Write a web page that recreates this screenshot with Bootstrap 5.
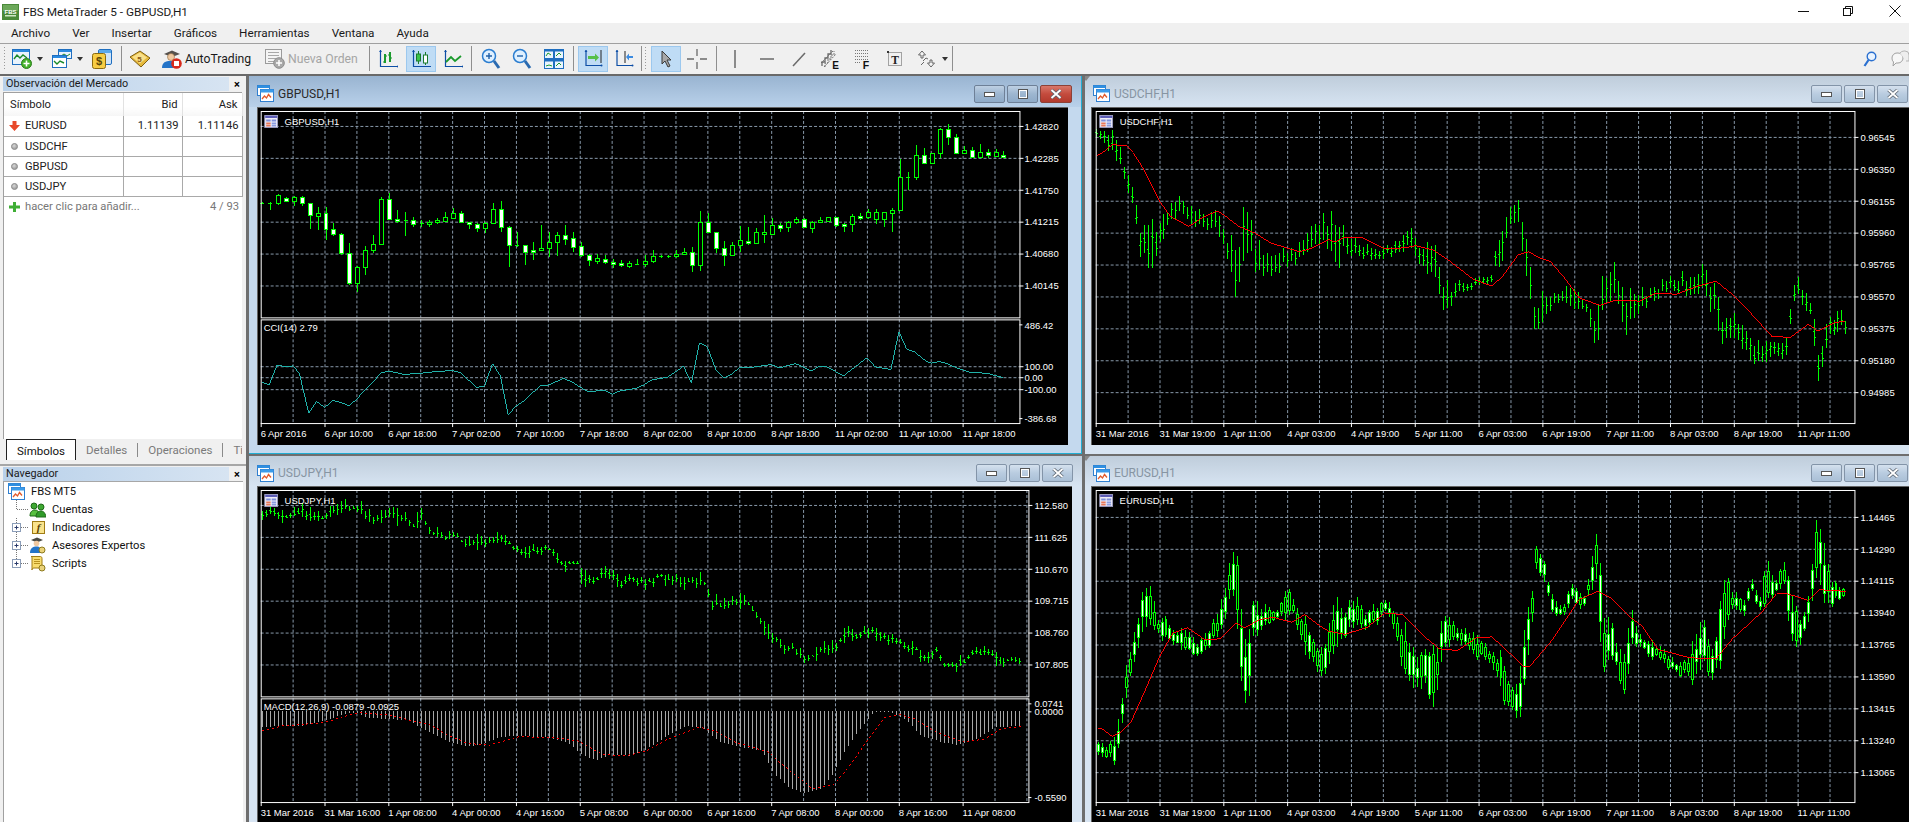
<!DOCTYPE html>
<html lang="es">
<head>
<meta charset="utf-8">
<title>FBS MetaTrader 5 - GBPUSD,H1</title>
<link rel="stylesheet" href="https://cdn.jsdelivr.net/npm/bootstrap@5.3.0/dist/css/bootstrap.min.css">
<style>
html,body{height:100%;margin:0;overflow:hidden;background:#f0f0f0}
body{font:11.2px Roboto,"Liberation Sans",sans-serif;color:#1a1a1a;display:flex;flex-direction:column;width:1909px;height:822px}
.titlebar{height:23px;background:#fff;font-size:11.8px;padding-left:2px;flex:none}
.titlebar .ttl{margin-left:4px}
.winctl{width:103px;margin-right:8px}
.menubar{height:21px;background:#f0f0f0;border-bottom:1px solid #a0a0a0;padding-left:11px;gap:22px;font-size:11.7px;flex:none}
.toolbar{height:32px;background:#f0f0f0;border-bottom:2px solid #696969;flex:none;padding-bottom:1px;font-size:12.2px}
.toolbar svg{flex:none;display:block}
.tsep{width:1px;height:25px;background:#8f8f8f;flex:none}
.tgrip{width:3px;height:25px;background:radial-gradient(circle,#9a9a9a 40%,transparent 45%) 0 0/3px 3px;flex:none}
.tact{width:30px;height:26px;background:#bfdcf5;border:1px solid #9cc8ee;display:flex;align-items:center;justify-content:center;flex:none}
.tcaret{width:0;height:0;border:3.5px solid transparent;border-top:4.5px solid #333;border-bottom:0;flex:none}
.txt-at{width:66px;margin-left:3px;white-space:nowrap;flex:none}
.txt-no{width:70px;margin-left:3px;color:#a5a5a5;white-space:nowrap;flex:none}
.m2{margin-left:2px}.m3{margin-left:3px}.m4{margin-left:4px}.m5{margin-left:5px}.m6{margin-left:6px}.m7{margin-left:7px}.m8{margin-left:8px}.m9{margin-left:9px}.m11{margin-left:11px}.m12{margin-left:12px}.m14{margin-left:14px}
.workarea{flex:1;min-height:0;display:flex}
.sidebar{width:246px;flex:none;background:#f0f0f0;display:flex;flex-direction:column}
.caption{margin:1px 0 0 3px;height:14px;display:flex;align-items:center;font-size:10.8px;flex:none}
.caption .capt{width:226px;height:14px;line-height:13px;padding-left:3px;background:linear-gradient(90deg,#b9d1ea,#d7e4f2);white-space:nowrap;overflow:hidden}
.caption .capx{width:16px;text-align:center;font-weight:700;font-size:11px;line-height:13px;color:#000}
.mw-panel{height:347px;margin:1px 4px 0 3px;background:#fff;border:solid #a0a0a0;border-width:1px 0 0 1px;flex:none}
.mw-table{table-layout:fixed;width:238px;margin:0;font-size:11.2px;--bs-table-bg:transparent}
.mwc1{width:119px}.mwc2{width:59px}.mwc3{width:60px}
.mw-table th,.mw-table td{padding:0 3px 0 4px;height:20px;border:0;border-right:1px solid #a9a9a9;border-bottom:1px solid #a9a9a9;font-weight:400;vertical-align:middle;color:#222;white-space:nowrap}
.mw-table th{height:23px;border-bottom:0;background:linear-gradient(#fff 60%,#f6f6f6);border-right-color:#e2e2e2;padding:0 4px 0 6px}
.mw-table td.sym{padding-left:4px}
.mw-table tfoot td{border:0;color:#777}
.symdot{width:7px;height:7px;border-radius:50%;background:radial-gradient(circle at 40% 35%,#d8d8d8,#8a8a8a);border:1px solid #8f8f8f;display:inline-block;margin:0 7px 0 3px;vertical-align:-0.5px}
.symico{display:inline-block;vertical-align:-2px;margin:0 5px 0 1px}
.tabstrip{height:22px;margin-left:3px;margin-right:4px;font-size:11.5px;color:#7a7a7a;flex:none;overflow:hidden}
.tabstrip>span{flex:none;white-space:nowrap}
.tabon{width:70px;height:21px;margin-left:3px;margin-top:-1px;background:#fff;border:1px solid #222;border-bottom:0;color:#111;display:flex;align-items:center;justify-content:center;padding-top:1px}
.tabdiv{width:1px;height:14px;background:#8a8a8a}
.tablabel{padding:0 10px}
.hsplit{height:2px;margin-top:3px;background:#a7a7a7;flex:none}
.nav-panel{flex:1;margin:0 3px 0 3px;background:#fff;border-left:1px solid #a0a0a0;border-top:1px solid #a7a7a7;padding-top:0;font-size:11.2px}
.treerow{height:18px;display:flex;align-items:center;white-space:nowrap;color:#111}
.treerow svg{flex:none;display:block}
.treerow .lbl{margin-left:6px}
.mdi{flex:1;min-width:0;background:#6e6e6e;padding-left:3px;display:grid;grid-template-columns:833px 825px;grid-template-rows:378px 366px;column-gap:3px;row-gap:2px;overflow:hidden}
.mdiwin{position:relative;overflow:hidden;background:#d7e4f2}
.mdiwin.on{background:#c4d9ee;border:solid #20add2;border-width:0 1px 1px 0}
.wintitle{height:31px;display:flex;align-items:center;padding:4px 2px 0 8px;background:linear-gradient(#bfcddb,#d7e4f2);color:#8795a3;font-size:12px}
.lower .wintitle{height:30px}
.on .wintitle{background:linear-gradient(#99b4d1,#b9d1ea);color:#2a2a2a;padding-right:8px}
.col1 .wintitle{padding-right:9px}
.wintitle .wtx{margin-left:4px}
.winbtns{margin-left:auto;display:flex;gap:2px}
.wbtn{width:31px;height:18px;padding:0;border:1px solid #8394a8;border-radius:2px;background:linear-gradient(#d5e1ee,#b9cce0 50%,#aac0d6);display:flex;align-items:center;justify-content:center}
.on .wbtn{background:linear-gradient(#bed0e3,#9db6d0 50%,#8fabc8);border-color:#6e8097}
.on .wbtn.cls{background:linear-gradient(#d8776a,#c44b3d 50%,#b23a2d);border-color:#8c4137;width:32px}
.chart{display:block;background:#000;border-top:1px solid #646464;border-left:1px solid #646464}
.col1 .chart{margin-left:8px}
.col2 .chart{margin-left:6px}
.ctx{font:9.5px "Liberation Sans",sans-serif;fill:#fff}
.splitmark{position:absolute;left:-3px;top:0;width:0;height:0;border:4px solid transparent;border-top:5px solid #888;border-bottom:0}
</style>
</head>
<body>
<svg class="d-none" aria-hidden="true">
  <symbol id="i-win" viewBox="0 0 17 17">
    <rect x=".5" y=".5" width="12" height="10" fill="#fff" stroke="#2f7fd0"/><rect x=".5" y=".5" width="12" height="2.5" fill="#2f8fe0"/>
    <rect x="3.5" y="4.5" width="13" height="12" fill="#fff" stroke="#2f7fd0"/><rect x="3.5" y="4.5" width="13" height="3" fill="#3a9bea"/>
    <path d="M5 14l2.500-3 2 2 2-3.500 2.500 3" fill="none" stroke="#e25b2c" stroke-width="1.300"/>
  </symbol>
  <symbol id="i-tab" viewBox="0 0 14 13">
    <rect x=".5" y=".5" width="13" height="12" fill="#f0eef8" stroke="#9a9ac0"/><rect x="1" y="1" width="12" height="2" fill="#5a5ab4"/>
    <path d="M2 4.500h4.500v2H2zM7.500 4.500H12v2H7.500z" fill="#7f8fd8"/><path d="M2 7.500h4.500v2H2zM2 10h4.500v1.600H2z" fill="#e6785a"/><path d="M7.500 7.500H12v2H7.500zM7.500 10H12v1.600H7.500z" fill="#8a9be0"/>
  </symbol>
  <symbol id="i-x" viewBox="0 0 12 10">
    <path d="M1.500 1l9 8M10.500 1l-9 8" stroke="#5a6470" stroke-width="3.400"/><path d="M1.500 1l9 8M10.500 1l-9 8" stroke="#fff" stroke-width="1.800"/>
  </symbol>
  <symbol id="i-min" viewBox="0 0 11 6"><rect x=".5" y="1.500" width="10" height="4" fill="#fff" stroke="#555"/></symbol>
  <symbol id="i-max" viewBox="0 0 10 10"><rect x="1" y="1" width="8" height="8" fill="none" stroke="#fff" stroke-width="2"/><rect x=".5" y=".5" width="9" height="9" fill="none" stroke="#555"/></symbol>
</svg>

<div class="titlebar d-flex align-items-center">
  <svg width="17" height="16" viewBox="0 0 17 16"><rect width="17" height="16" fill="#4b8a3a"/><rect x="1" y="1" width="15" height="6" fill="#6ca85a"/><text x="8.500" y="9.500" text-anchor="middle" font-family="Liberation Sans" font-weight="700" font-size="6" fill="#fff">FBS</text><rect x="3" y="11" width="11" height="1.500" fill="#cfe6c5"/></svg>
  <span class="ttl">FBS MetaTrader 5 - GBPUSD,H1</span>
  <svg class="ms-auto winctl" width="103" height="16" viewBox="0 0 103 16">
    <path d="M0 7.500h11" stroke="#111"/>
    <rect x="45.500" y="4.500" width="7" height="7" fill="none" stroke="#111"/>
    <path d="M47.500 4.500V2.500h7v7h-2" fill="none" stroke="#111"/>
    <path d="M91.500 1.500l11 11M102.500 1.500l-11 11" stroke="#111"/>
  </svg>
</div>
<div class="menubar d-flex align-items-center">
  <span>Archivo</span><span>Ver</span><span>Insertar</span><span>Gráficos</span><span>Herramientas</span><span>Ventana</span><span>Ayuda</span>
</div>
<div class="toolbar d-flex align-items-center">
  <span class="tgrip m3"></span>
  <svg class="m6" width="20" height="20" viewBox="0 0 20 20"><rect x=".5" y=".5" width="17" height="15" fill="#e9f3fc" stroke="#1f6fc0"/><rect x="1" y="1" width="16" height="2" fill="#2a8ae0"/><path d="M2 10l3-4 3 3 3-3 4 3" fill="none" stroke="#1b8a2c" stroke-width="1.400"/><circle cx="14.500" cy="14.500" r="5" fill="#43b02a" stroke="#2b7d1c"/><path d="M14.500 11.500v6M11.500 14.500h6" stroke="#fff" stroke-width="1.600"/></svg>
  <span class="tcaret m5"></span>
  <svg class="m9" width="20" height="20" viewBox="0 0 20 20"><rect x="6.500" y=".5" width="13" height="9" fill="#e9f3fc" stroke="#1f6fc0"/><rect x="7" y="1" width="12" height="2" fill="#2a8ae0"/><path d="M9 7l3-2 3 2 3-2" fill="none" stroke="#1b8a2c"/><rect x=".5" y="6.500" width="14" height="12" fill="#fff" stroke="#1f6fc0"/><rect x="1" y="7" width="13" height="2" fill="#2a8ae0"/><path d="M2 12l3 3 3-3 4 2" fill="none" stroke="#1b8a2c" stroke-width="1.400"/></svg>
  <span class="tcaret m5"></span>
  <svg class="m9" width="20" height="20" viewBox="0 0 20 20"><rect x="6.500" y=".5" width="13" height="15" rx="1.500" fill="#cfe3f8" stroke="#1f6fc0"/><rect x="7" y="1" width="12" height="3" fill="#5aa8ea"/><rect x=".5" y="4.500" width="13" height="15" rx="2" fill="#f7cd45" stroke="#8a6a10"/><text x="7" y="16" text-anchor="middle" font-family="Liberation Sans" font-weight="700" font-size="11" fill="#5b4708">$</text></svg>
  <span class="tsep m9"></span>
  <svg class="m7" width="22" height="20" viewBox="0 0 22 20"><path d="M1 8l10-6 10 7-9 9z" fill="#e5b83a" stroke="#7f5f12"/><path d="M3 8l8-4.500 7 5-7 6z" fill="#f9e08a"/><text x="10.500" y="13" text-anchor="middle" font-family="Liberation Sans" font-weight="700" font-size="8" fill="#8a5a12">5</text></svg>
  <svg class="m11" width="20" height="20" viewBox="0 0 20 20"><path d="M2 5l8-3.500L18 5l-8 3z" fill="#55504c"/><circle cx="9" cy="8" r="3.500" fill="#f0c8a0" stroke="#8a6a40" stroke-width=".6"/><path d="M0 19c0-6 4-7 8-7 2 0 4 .5 5 2l-2 5z" fill="#2474c8"/><circle cx="14.500" cy="14.500" r="5.300" fill="#d8291c"/><rect x="12" y="12" width="5" height="5" fill="#fff"/></svg>
  <span class="txt-at">AutoTrading</span>
  <svg class="m14" width="20" height="20" viewBox="0 0 20 20"><rect x=".5" y=".5" width="16" height="14" fill="#f4f4f4" stroke="#9b9b9b"/><path d="M3 3.500h11M3 6.500h11M3 9.500h8M3 12.500h6" stroke="#a8a8a8"/><circle cx="14" cy="14" r="5.300" fill="#a9a9a9" stroke="#8c8c8c"/><path d="M14 11v6M11 14h6" stroke="#fff" stroke-width="1.500"/></svg>
  <span class="txt-no">Nueva Orden</span>
  <span class="tsep m11"></span>
  <svg class="m8" width="20" height="20" viewBox="0 0 20 20"><path d="M2.500 1v16.500H20" fill="none" stroke="#0d4ea6" stroke-width="1.200"/><path d="M2.500 1l-1.500 2h3zM19 16l1 1.500-1 1.500z" fill="#0d4ea6"/><path d="M7 5v9M5.500 13H7M7 7h1.500M12 3v10M10.500 6H12M12 9h1.500" stroke="#1a9a2c" stroke-width="2"/></svg>
  <span class="tact m8"><svg width="20" height="20" viewBox="0 0 20 20"><path d="M2.500 1v16.500H20" fill="none" stroke="#0d4ea6" stroke-width="1.200"/><path d="M2.500 1l-1.500 2h3z" fill="#0d4ea6"/><rect x="5.500" y="5" width="4" height="7" fill="#3cc44a" stroke="#1a7a2c"/><path d="M7.500 2v3M7.500 12v3" stroke="#1a7a2c"/><rect x="12.500" y="6" width="4" height="8" fill="#fff" stroke="#1a7a2c"/><path d="M14.500 3v3M14.500 14v2" stroke="#1a7a2c"/></svg></span>
  <svg class="m7" width="20" height="20" viewBox="0 0 20 20"><path d="M2.500 1v16.500H20" fill="none" stroke="#0d4ea6" stroke-width="1.200"/><path d="M2.500 1l-1.500 2h3zM19 16l1 1.500-1 1.500z" fill="#0d4ea6"/><path d="M3 13l5-5 4 4 6-5" fill="none" stroke="#1a9a2c" stroke-width="1.800"/></svg>
  <span class="tsep m8"></span>
  <svg class="m9" width="20" height="22" viewBox="0 0 20 22"><circle cx="8" cy="8" r="6.500" fill="#dff0ff" stroke="#2a7dd0" stroke-width="1.500"/><path d="M5 8h6M8 5v6" stroke="#1f5fa8" stroke-width="1.400"/><path d="M13 13l5 7" stroke="#2a6ab0" stroke-width="3"/></svg>
  <svg class="m11" width="20" height="22" viewBox="0 0 20 22"><circle cx="8" cy="8" r="6.500" fill="#dff0ff" stroke="#2a7dd0" stroke-width="1.500"/><path d="M5 8h6" stroke="#1f5fa8" stroke-width="1.400"/><path d="M13 13l5 7" stroke="#2a6ab0" stroke-width="3"/></svg>
  <svg class="m12" width="20" height="20" viewBox="0 0 20 20"><rect x=".5" y=".5" width="9" height="9" fill="#eaf4fd" stroke="#1f6fc0"/><rect x="10.500" y=".5" width="9" height="9" fill="#eaf4fd" stroke="#1f6fc0"/><rect x=".5" y="10.500" width="9" height="9" fill="#eaf4fd" stroke="#1f6fc0"/><rect x="10.500" y="10.500" width="9" height="9" fill="#eaf4fd" stroke="#1f6fc0"/><path d="M1 1.500h8M11 1.500h8M1 11.500h8M11 11.500h8" stroke="#1f6fc0" stroke-width="2"/><path d="M2 7l2-3 3 2M12 7l3-3 2 2M2 17l3-1 3 1M12 17l3-3 2 2" fill="none" stroke="#1a9a2c"/></svg>
  <span class="tsep m9"></span>
  <span class="tact m4"><svg width="20" height="20" viewBox="0 0 20 20"><path d="M3 1v15.500h16" fill="none" stroke="#0d4ea6" stroke-width="1.200"/><path d="M3 1L1.500 3h3z" fill="#0d4ea6"/><circle cx="18.500" cy="16.500" r="1" fill="#0d4ea6"/><path d="M5 7h7V4.500L16 8.500 12 12.500V10H5z" fill="#56c04a"/><path d="M18 1v13" stroke="#222"/></svg></span>
  <svg class="m6" width="20" height="20" viewBox="0 0 20 20"><path d="M3 1v15.500h16" fill="none" stroke="#0d4ea6" stroke-width="1.200"/><path d="M3 1L1.500 3h3z" fill="#0d4ea6"/><circle cx="18.500" cy="16.500" r="1" fill="#0d4ea6"/><path d="M11 2v12" stroke="#222"/><path d="M19 7h-4V4.500L12 8l3 3.500V9h4z" fill="#3a8ae0"/></svg>
  <span class="tsep m7"></span><span class="tgrip m2"></span>
  <span class="tact m4"><svg width="14" height="18" viewBox="0 0 14 18"><path d="M3 1v13l3-3 3 6 2-1-3-6h4z" fill="#a8a8a8" stroke="#3a3a3a"/></svg></span>
  <svg class="m6" width="20" height="20" viewBox="0 0 20 20"><path d="M10 0v7M10 13v7M0 10h7M13 10h7" stroke="#6a6a6a" stroke-width="1.300"/></svg>
  <span class="tsep m9"></span>
  <svg class="m8" width="20" height="20" viewBox="0 0 20 20"><path d="M10 1v18" stroke="#6a6a6a" stroke-width="1.500"/></svg>
  <svg class="m12" width="20" height="20" viewBox="0 0 20 20"><path d="M3 10h14" stroke="#6a6a6a" stroke-width="1.500"/></svg>
  <svg class="m12" width="20" height="20" viewBox="0 0 20 20"><path d="M4 17L16 4" stroke="#6a6a6a" stroke-width="1.500"/></svg>
  <svg class="m12" width="20" height="20" viewBox="0 0 20 20"><path d="M1 17V13h3V9h3V5h3V1" fill="none" stroke="#6a6a6a" stroke-width="1.300"/><path d="M4 18v-4h3v-4h3V6h3V2M0 14L12 2M3 18L15 5" fill="none" stroke="#6a6a6a" stroke-width=".9" stroke-dasharray="2 1"/><text x="14.500" y="19.500" font-family="Liberation Sans" font-weight="700" font-size="10" fill="#111" text-anchor="middle">E</text></svg>
  <svg class="m12" width="20" height="20" viewBox="0 0 20 20"><path d="M2 1.500h14M2 4.500h14M2 7.500h14M2 10.500h14M2 13.500h6" stroke="#777" stroke-dasharray="1 1"/><text x="13" y="19.500" font-family="Liberation Sans" font-weight="700" font-size="10.500" fill="#111" text-anchor="middle">F</text></svg>
  <svg class="m12" width="20" height="20" viewBox="0 0 20 20"><rect x="3.500" y="3.500" width="13" height="13" fill="none" stroke="#555" stroke-dasharray="1 1"/><rect x="2" y="2" width="2" height="2" fill="#333"/><text x="10" y="14.500" font-family="Liberation Serif" font-weight="700" font-size="11.500" fill="#222" text-anchor="middle">T</text></svg>
  <svg class="m12" width="20" height="20" viewBox="0 0 20 20"><path d="M5 2L1.500 6H4v3h2V6h2.500zM14 18l3.500-4H15v-3h-2v3h-2.500z" fill="#f4f4f4" stroke="#666"/><path d="M4 16l3-3M6 12l3-3 2 1" fill="none" stroke="#666"/></svg>
  <span class="tcaret m5"></span>
  <span class="tsep m4"></span>
  <svg class="ms-auto" width="14" height="16" viewBox="0 0 14 16"><circle cx="8.500" cy="5.500" r="4.300" fill="#eaf4ff" stroke="#2a70d0" stroke-width="1.400"/><path d="M5.500 9L1.500 15" stroke="#2a70d0" stroke-width="2.200"/></svg>
  <svg class="m14" width="18" height="18" viewBox="0 0 18 18"><path d="M1 8a5 5 0 0 1 5-5h1a5 5 0 0 1 0 10H5l-3 3 .5-4A5 5 0 0 1 1 8z" fill="#f7f7f7" stroke="#a0a0a0"/><path d="M9 3a5 5 0 0 1 4-2h1a4 4 0 0 1 4 4v6h-3" fill="#eee" stroke="#b5b5b5"/></svg>
</div>

<div class="workarea">
  <aside class="sidebar">
    <div class="caption"><span class="capt">Observación del Mercado</span><span class="capx">×</span></div>
    <div class="mw-panel">
      <table class="table mw-table">
        <colgroup><col class="mwc1"><col class="mwc2"><col class="mwc3"></colgroup>
        <thead><tr><th>Símbolo</th><th class="text-end">Bid</th><th class="text-end">Ask</th></tr></thead>
        <tbody>
          <tr><td class="sym"><svg class="symico" width="11" height="10" viewBox="0 0 11 10"><path d="M3.500 0h4v4H11L5.500 10 0 4h3.500z" fill="#e8492a"/></svg>EURUSD</td><td class="text-end">1.11139</td><td class="text-end">1.11146</td></tr>
          <tr><td class="sym"><span class="symdot"></span>USDCHF</td><td></td><td></td></tr>
          <tr><td class="sym"><span class="symdot"></span>GBPUSD</td><td></td><td></td></tr>
          <tr><td class="sym"><span class="symdot"></span>USDJPY</td><td></td><td></td></tr>
        </tbody>
        <tfoot><tr><td class="sym" colspan="2"><svg class="symico" width="11" height="10" viewBox="0 0 11 10"><path d="M4 0h3v3.500h4v3H7V10H4V6.500H0v-3h4z" fill="#3fae35"/></svg>hacer clic para añadir...</td><td class="text-end">4 / 93</td></tr></tfoot>
      </table>
    </div>
    <div class="tabstrip d-flex align-items-center">
      <span class="tabon">Símbolos</span><span class="tablabel">Detalles</span><span class="tabdiv"></span><span class="tablabel">Operaciones</span><span class="tabdiv"></span><span class="tablabel">Ti</span>
    </div>
    <div class="hsplit"></div>
    <div class="caption"><span class="capt">Navegador</span><span class="capx">×</span></div>
    <div class="nav-panel">
      <div class="treerow"><svg class="m4" width="17" height="17"><use href="#i-win"/></svg><span class="lbl">FBS MT5</span></div>
      <div class="treerow">
        <svg width="25" height="18" viewBox="0 0 25 18"><path d="M12.500 0v9M13 9.500h12" stroke="#777" stroke-dasharray="1 1"/></svg>
        <svg width="17" height="17" viewBox="0 0 17 17"><circle cx="5" cy="5" r="3" fill="#3ea832" stroke="#1f6a18"/><circle cx="12" cy="6" r="3" fill="#3ea832" stroke="#1f6a18"/><path d="M1 15c0-5 3-6 5-6s4 1 5 6z" fill="#57c040" stroke="#1f6a18"/><path d="M7 16c0-5 3-6 5-6s4 1 5 6z" fill="#2f9a28" stroke="#1f6a18"/></svg>
        <span class="lbl">Cuentas</span>
      </div>
      <div class="treerow">
        <svg width="25" height="18" viewBox="0 0 25 18"><path d="M12.500 0v18M17 9.500h8" stroke="#777" stroke-dasharray="1 1"/><rect x="8.500" y="5.500" width="8" height="8" fill="#fff" stroke="#8b9db8"/><path d="M10.500 9.500h4M12.500 7.500v4" stroke="#2a3a6a"/></svg>
        <svg width="17" height="17" viewBox="0 0 17 17"><rect x="3.500" y="2.500" width="12" height="12" fill="#f9e38c" stroke="#a07c15"/><text x="9.500" y="12" text-anchor="middle" font-family="Liberation Serif" font-style="italic" font-weight="700" font-size="11" fill="#5a4206">f</text></svg>
        <span class="lbl">Indicadores</span>
      </div>
      <div class="treerow">
        <svg width="25" height="18" viewBox="0 0 25 18"><path d="M12.500 0v18M17 9.500h8" stroke="#777" stroke-dasharray="1 1"/><rect x="8.500" y="5.500" width="8" height="8" fill="#fff" stroke="#8b9db8"/><path d="M10.500 9.500h4M12.500 7.500v4" stroke="#2a3a6a"/></svg>
        <svg width="17" height="17" viewBox="0 0 17 17"><path d="M2 3l6-2.500L14 3 8 5.500z" fill="#4a4a44"/><circle cx="7.500" cy="6.500" r="2.800" fill="#f0c8a0"/><path d="M1 16c0-5 3-6.500 6.500-6.500S12 11 12 16z" fill="#2474c8"/><circle cx="13" cy="13" r="3" fill="#ead27a" stroke="#8d7a1e"/></svg>
        <span class="lbl">Asesores Expertos</span>
      </div>
      <div class="treerow">
        <svg width="25" height="18" viewBox="0 0 25 18"><path d="M12.500 0v10M17 9.500h8" stroke="#777" stroke-dasharray="1 1"/><rect x="8.500" y="5.500" width="8" height="8" fill="#fff" stroke="#8b9db8"/><path d="M10.500 9.500h4M12.500 7.500v4" stroke="#2a3a6a"/></svg>
        <svg width="17" height="17" viewBox="0 0 17 17"><path d="M2 1.500h9.500c1 0 1.500 1 1.500 2V13H5c-1.500 0-2 1-2 2V3c0-1-.5-1.500-1-1.500z" fill="#f8dc6e" stroke="#a07c15"/><path d="M5 4.500h6M5 6.500h6M5 8.500h6" stroke="#b8921f"/><circle cx="13" cy="13" r="3" fill="#ead27a" stroke="#8d7a1e"/></svg>
        <span class="lbl">Scripts</span>
      </div>
    </div>
  </aside>

  <main class="mdi">
    <section class="mdiwin on col1">
      <header class="wintitle"><svg width="17" height="17"><use href="#i-win"/></svg><span class="wtx">GBPUSD,H1</span>
        <div class="winbtns"><button class="wbtn" type="button" aria-label="min"><svg width="11" height="6"><use href="#i-min"/></svg></button><button class="wbtn" type="button" aria-label="max"><svg width="10" height="10"><use href="#i-max"/></svg></button><button class="wbtn cls" type="button" aria-label="cerrar"><svg width="12" height="10"><use href="#i-x"/></svg></button></div></header>
      <svg class="chart" id="c-gbp" width="811" height="338" viewBox="258 108 811 338"></svg>
    </section>
    <section class="mdiwin col2">
      <span class="splitmark"></span>
      <header class="wintitle"><svg width="17" height="17"><use href="#i-win"/></svg><span class="wtx">USDCHF,H1</span>
        <div class="winbtns"><button class="wbtn" type="button" aria-label="min"><svg width="11" height="6"><use href="#i-min"/></svg></button><button class="wbtn" type="button" aria-label="max"><svg width="10" height="10"><use href="#i-max"/></svg></button><button class="wbtn" type="button" aria-label="cerrar"><svg width="12" height="10"><use href="#i-x"/></svg></button></div></header>
      <svg class="chart" id="c-chf" width="818" height="338" viewBox="1092 108 818 338"></svg>
    </section>
    <section class="mdiwin col1 lower">
      <header class="wintitle"><svg width="17" height="17"><use href="#i-win"/></svg><span class="wtx">USDJPY,H1</span>
        <div class="winbtns"><button class="wbtn" type="button" aria-label="min"><svg width="11" height="6"><use href="#i-min"/></svg></button><button class="wbtn" type="button" aria-label="max"><svg width="10" height="10"><use href="#i-max"/></svg></button><button class="wbtn" type="button" aria-label="cerrar"><svg width="12" height="10"><use href="#i-x"/></svg></button></div></header>
      <svg class="chart" id="c-jpy" width="815" height="336" viewBox="258 487 815 336"></svg>
    </section>
    <section class="mdiwin col2 lower">
      <span class="splitmark"></span>
      <header class="wintitle"><svg width="17" height="17"><use href="#i-win"/></svg><span class="wtx">EURUSD,H1</span>
        <div class="winbtns"><button class="wbtn" type="button" aria-label="min"><svg width="11" height="6"><use href="#i-min"/></svg></button><button class="wbtn" type="button" aria-label="max"><svg width="10" height="10"><use href="#i-max"/></svg></button><button class="wbtn" type="button" aria-label="cerrar"><svg width="12" height="10"><use href="#i-x"/></svg></button></div></header>
      <svg class="chart" id="c-eur" width="818" height="336" viewBox="1092 487 818 336"></svg>
    </section>
  </main>
</div>

<script src="https://cdn.jsdelivr.net/npm/bootstrap@5.3.0/dist/js/bootstrap.bundle.min.js"></script>
<script>
const GRID='#8899aa',G='#00ff00',ZX=1.889,ZX2=1.891;
function rng(seed){return function(){seed|=0;seed=seed+0x6D2B79F5|0;let t=Math.imul(seed^seed>>>15,1|seed);t=t+Math.imul(t^t>>>7,61|t)^t;return((t^t>>>14)>>>0)/4294967296}}
function interp(tab,X){let i=0;while(i<tab.length-2&&tab[i+1][0]<X)i++;const a=tab[i],b=tab[i+1],f=Math.max(0,Math.min(1,(X-a[0])/(b[0]-a[0])));return a.map((v,k)=>v+(b[k]-v)*f)}
function px(v){return Math.floor(v)+.5}
function frame(c){
  let s='';
  const vx=[];for(let x=c.v0;x<c.R;x+=32)vx.push(px(x));
  c.panes.forEach(p=>{
    vx.forEach(x=>{s+=`<path d="M${x} ${p.t}V${p.b}" stroke="${GRID}" stroke-dasharray="3 2"/>`});
    (p.h||[]).forEach(h=>{const y=px(h[0]);s+=`<path d="M${c.L} ${y}H${c.R}" stroke="${GRID}" stroke-dasharray="3 2"/>`});
  });
  return s;
}
function frameTop(c){
  let s='';
  c.panes.forEach(p=>{
    s+=`<rect x="${px(c.L)}" y="${px(p.t)}" width="${Math.round(c.R-c.L)}" height="${Math.round(p.b-p.t)}" fill="none" stroke="#fff"/>`;
    (p.h||[]).forEach(h=>{const y=px(h[0]);s+=`<path d="M${c.R} ${y}h4" stroke="#fff"/>`});
    (p.l||[]).forEach(l=>{s+=`<path d="M${c.R} ${px(l[0])}h3" stroke="#fff"/>`;s+=`<text class="ctx" x="${c.R+c.lx}" y="${l[0]+3.5}">${l[1]}</text>`});
    (p.h||[]).forEach(h=>{s+=`<text class="ctx" x="${c.R+c.lx}" y="${h[0]+3.5}">${h[1]}</text>`});
  });
  const bot=c.panes[c.panes.length-1].b;
  c.dates.forEach((d,i)=>{const x=c.L+64*i;s+=`<path d="M${px(x)} ${bot}v4" stroke="#fff"/><text class="ctx" x="${x}" y="${bot+13.5}">${d}</text>`});
  s+=`<svg x="${c.L+3.5}" y="${c.panes[0].t+4}" width="14" height="13" viewBox="0 0 14 13"><use href="#i-tab"/></svg><text class="ctx" x="${c.L+24}" y="${c.panes[0].t+14.500}">${c.name}</text>`;
  return s;
}
function line(pts,ox,oy,sx,col,extra){
  return `<polyline fill="none" stroke="${col}" ${extra||''} shape-rendering="crispEdges" points="${pts.map(p=>(ox+p[0]/sx).toFixed(1)+','+(oy+p[1]/3).toFixed(1)).join(' ')}"/>`;
}
function candleSvg(x,hi,top,bot,lo,white,w){
  top=Math.round(top);bot=Math.round(bot);hi=Math.round(hi);lo=Math.round(lo);
  let s=`<path d="M${x} ${hi}V${lo}" stroke="${G}"/>`;
  if(bot-top<2){s+=`<path d="M${x-(w-1)/2} ${top+.5}h${w-1}" stroke="${G}"/>`}
  else s+=`<rect x="${x-(w-1)/2}" y="${top+.5}" width="${w-1}" height="${bot-top}" fill="${white?'#fff':'#000'}" stroke="${G}"/>`;
  return s;
}

/* ---------- GBPUSD ---------- */
(function(){
const D=[[305,308,308,312,0],[305,308,308,330,0],[282,286,308,315,0],[292,295,302,305,1],[288,292,302,318,0],[288,292,310,318,1],[310,310,344,387,1],[320,340,347,390,0],[322,340,388,420,1],[368,388,403,408,1],[400,403,458,465,1],[430,460,553,558,1],[497,502,553,580,0],[438,451,502,525,0],[405,433,451,458,0],[290,297,433,435,0],[280,298,358,360,1],[330,358,364,368,1],[335,361,361,408,0],[350,361,373,380,1],[360,370,370,382,0],[360,367,373,380,0],[355,360,367,372,0],[335,352,362,365,0],[325,340,353,358,0],[333,340,367,370,1],[365,367,373,388,1],[368,372,385,395,1],[365,369,385,400,0],[310,328,370,372,0],[303,328,380,395,1],[378,380,436,500,1],[395,436,436,440,0],[434,436,455,495,1],[425,450,455,480,1],[375,445,451,450,0],[395,425,445,472,0],[395,406,425,468,0],[375,406,418,435,1],[395,414,440,455,1],[425,439,466,470,1],[462,466,481,498,1],[462,475,482,492,0],[465,478,487,492,1],[478,485,491,505,1],[480,490,496,500,1],[483,490,497,503,0],[478,493,493,495,0],[464,484,493,500,0],[450,469,484,490,0],[465,469,469,475,0],[464,469,469,473,0],[450,461,469,473,0],[445,457,462,465,0],[442,457,496,515,1],[333,367,496,513,0],[338,367,397,400,1],[395,397,445,460,1],[422,445,464,497,1],[425,436,464,468,0],[378,421,436,457,0],[380,422,430,435,1],[385,397,430,432,0],[345,397,401,430,0],[355,376,402,405,0],[370,375,383,395,1],[362,367,382,395,0],[350,357,367,372,0],[355,358,382,385,1],[362,365,383,400,0],[352,360,366,368,0],[350,352,362,367,0],[350,352,376,380,1],[368,373,377,395,1],[343,349,373,395,0],[340,348,353,360,1],[328,337,352,358,0],[328,337,358,372,0],[335,337,358,380,0],[325,330,338,395,0],[178,232,330,332,0],[217,232,232,270,0],[135,166,232,240,0],[145,166,190,192,1],[160,160,190,190,0],[85,88,160,175,0],[72,88,112,135,1],[102,112,158,160,1],[138,151,158,160,0],[140,151,170,175,1],[133,157,171,175,0],[148,157,165,175,1],[148,156,168,172,0],[152,165,170,175,1]];
const Y=v=>100+v/3;
const c={L:260,R:1021,v0:292,lx:5,name:'GBPUSD,H1',dates:['6 Apr 2016','6 Apr 10:00','6 Apr 18:00','7 Apr 02:00','7 Apr 10:00','7 Apr 18:00','8 Apr 02:00','8 Apr 10:00','8 Apr 18:00','11 Apr 02:00','11 Apr 10:00','11 Apr 18:00'],
 panes:[{t:111,b:318,h:[[126.3,'1.42820'],[158.3,'1.42285'],[190.3,'1.41750'],[222.3,'1.41215'],[254.3,'1.40680'],[286.3,'1.40145']]},
        {t:320,b:424,h:[[367.3,'100.00'],[378.3,'0.00'],[390.3,'-100.00']],l:[[325.7,'486.42'],[419,'-386.68']]}]};
let s=frame(c);
let g='';D.forEach((d,i)=>{const x=px(261.6+8*i);g+=candleSvg(x,Y(d[0]),Y(d[1]),Y(d[2]),Y(d[3]),d[4],5)});
s+=`<g shape-rendering="crispEdges">${g}</g>`;
const cci=[[22,850],[35,857],[50,797],[65,802],[80,800],[92,822],[110,942],[125,907],[140,925],[156,904],[171,910],[186,920],[201,900],[216,872],[231,850],[246,822],[261,816],[290,826],[322,822],[352,817],[382,814],[397,820],[428,865],[443,860],[458,793],[473,830],[488,947],[503,920],[518,905],[548,860],[563,858],[593,838],[608,848],[639,878],[669,873],[685,885],[700,875],[730,868],[745,857],[760,842],[790,834],[820,801],[835,852],[850,731],[865,742],[881,810],[896,837],[911,825],[926,805],[941,806],[986,796],[1002,806],[1032,793],[1062,815],[1077,802],[1092,803],[1123,830],[1168,775],[1183,803],[1213,811],[1228,697],[1243,750],[1258,758],[1279,785],[1289,792],[1304,787],[1319,793],[1339,807],[1364,820],[1394,822],[1425,835]];
s+=line(cci,250,100,ZX,'#20b2aa');
s+=frameTop(c);
s+=`<text class="ctx" x="263" y="332">CCI(14) 2.79</text>`;
document.getElementById('c-gbp').innerHTML=s;
})();

/* ---------- USDJPY ---------- */
(function(){
const C=[[22,185],[50,188],[65,200],[95,183],[120,195],[135,205],[150,180],[165,172],[210,172],[222,200],[235,208],[265,195],[295,205],[310,230],[325,195],[340,245],[375,265],[390,250],[405,285],[445,275],[460,265],[480,260],[495,288],[520,308],[545,295],[570,298],[585,335],[620,340],[630,385],[655,390],[665,360],[690,380],[700,405],[720,380],[730,395],[760,390],[775,375],[800,392],[850,390],[862,400],[875,460],[895,465],[910,452],[940,452],[965,510],[985,545],[1010,595],[1030,590],[1045,630],[1070,615],[1085,595],[1105,600],[1125,555],[1150,555],[1180,535],[1200,560],[1225,570],[1240,590],[1260,595],[1280,625],[1300,600],[1315,650],[1350,640],[1365,610],[1400,605],[1415,640],[1440,630],[1465,632]];
const H=[[22,835],[60,830],[100,830],[150,810],[185,793],[200,790],[220,805],[260,810],[300,815],[340,850],[380,880],[410,893],[440,885],[470,865],[500,860],[560,865],[600,880],[630,920],[655,933],[680,918],[720,920],[750,900],[790,860],[830,830],[860,840],[890,880],[930,895],[970,905],[990,970],[1020,1015],[1050,1033],[1080,1020],[1100,985],[1125,910],[1150,850],[1180,790],[1210,788],[1240,810],[1270,860],[1310,880],[1340,888],[1370,875],[1410,835],[1465,830]];
const SG=[[22,845],[60,830],[100,825],[140,820],[170,805],[205,790],[260,797],[300,812],[340,825],[370,855],[410,882],[450,888],[510,862],[590,867],[620,875],[665,915],[710,920],[750,905],[790,870],[850,833],[880,845],[920,880],[980,908],[1010,950],[1065,1020],[1105,1005],[1130,960],[1170,870],[1200,805],[1230,795],[1260,810],[1300,850],[1350,878],[1390,870],[1420,840],[1465,830]];
const c={L:260,R:1030,v0:292,lx:6,name:'USDJPY,H1',dates:['31 Mar 2016','31 Mar 16:00','1 Apr 08:00','4 Apr 00:00','4 Apr 16:00','5 Apr 08:00','6 Apr 00:00','6 Apr 16:00','7 Apr 08:00','8 Apr 00:00','8 Apr 16:00','11 Apr 08:00'],
 panes:[{t:490,b:697,h:[[505.3,'112.580'],[537.3,'111.625'],[569.3,'110.670'],[601.3,'109.715'],[633.3,'108.760'],[665.3,'107.805']]},
        {t:699,b:803,l:[[704,'0.0741'],[712,'0.0000'],[798,'-0.5590']]}]};
let s=frame(c),r=rng(7),g='';
for(let i=0;i<191;i++){
  const X=22+7.555*i,x=px(250+X/ZX),y=450+interp(C,X)[1]/3;
  const up=1+r()*r()*11,dn=1+r()*r()*11;
  const t=Math.round(y-up),b=Math.round(y+dn),o=Math.round(y-up*.4+r()*dn*.6),cl=Math.round(y+dn*.4-r()*up*.6);
  g+=`<path d="M${x} ${t}V${b}M${x-1} ${o+.5}h1M${x} ${cl+.5}h1.500" stroke="${G}"/>`;
}
s+=`<g shape-rendering="crispEdges">${g}</g>`;
let m='';
for(let i=0;i<191;i++){const X=22+7.555*i,x=px(250+X/ZX),y=450+interp(H,X)[1]/3;m+=`M${x} 712V${Math.round(y)}`}
s+=`<path d="${m}" stroke="#a8a8a8" shape-rendering="crispEdges"/>`;
s+=line(SG,250,450,ZX,'#ff0000','stroke-dasharray="2 3"');
s+=frameTop(c);
s+=`<text class="ctx" x="263" y="711">MACD(12,26,9) -0.0879 -0.0925</text>`;
document.getElementById('c-jpy').innerHTML=s;
})();

/* ---------- USDCHF ---------- */
(function(){
const E=[[30,170,205],[65,170,270],[85,280,340],[100,340,440],[115,470,580],[130,440,610],[150,450,560],[165,400,470],[190,375,440],[215,395,470],[240,420,480],[255,380,480],[275,470,530],[295,500,690],[310,345,590],[330,480,610],[350,510,620],[365,520,620],[400,530,600],[430,465,550],[460,400,520],[490,440,600],[515,500,560],[545,510,570],[575,530,570],[610,490,550],[625,450,530],[650,530,620],[670,480,610],[690,630,740],[720,630,680],[745,620,660],[780,595,640],[800,420,590],[815,410,480],[830,365,470],[840,430,560],[855,590,710],[865,680,815],[880,650,750],[905,660,700],[935,640,720],[960,690,730],[980,750,855],[990,590,730],[1020,565,700],[1035,680,815],[1055,610,740],[1075,660,720],[1110,620,670],[1150,600,680],[1185,560,690],[1210,640,790],[1220,730,840],[1245,730,810],[1270,780,890],[1295,785,880],[1320,815,870],[1340,790,870],[1350,650,720],[1362,610,700],[1385,690,750],[1400,800,950],[1420,720,800],[1450,720,795]];
const MA=[[30,258],[40,250],[60,224],[85,228],[100,250],[120,300],[150,395],[170,440],[205,470],[235,440],[260,424],[275,440],[300,470],[330,490],[360,520],[415,547],[440,535],[470,510],[480,518],[500,503],[535,505],[575,537],[615,535],[635,528],[670,542],[700,575],[745,630],[780,650],[800,620],[830,555],[850,547],[870,565],[890,575],[920,630],[945,685],[985,708],[1015,692],[1060,695],[1090,672],[1130,674],[1170,650],[1205,635],[1240,680],[1270,730],[1310,800],[1345,805],[1380,765],[1398,785],[1430,760],[1450,755]];
const c={L:1095,R:1856,v0:1127,lx:6,name:'USDCHF,H1',dates:['31 Mar 2016','31 Mar 19:00','1 Apr 11:00','4 Apr 03:00','4 Apr 19:00','5 Apr 11:00','6 Apr 03:00','6 Apr 19:00','7 Apr 11:00','8 Apr 03:00','8 Apr 19:00','11 Apr 11:00'],
 panes:[{t:111,b:424,h:['0.96545','0.96350','0.96155','0.95960','0.95765','0.95570','0.95375','0.95180','0.94985'].map((t,i)=>[137.3+32*i,t])}]};
let s=frame(c),r=rng(21),g='';
for(let i=0;i<189;i++){
  const X=30+7.564*i,x=px(1080+X/ZX2),e=interp(E,X),rg=e[2]-e[1];
  const a=r(),t=70+(e[1]+rg*a*.5)/3,b=70+(e[2]-rg*(1-a)*r()*.5)/3;
  const o=t+(b-t)*(.3+r()*.4),cl=t+(b-t)*(.3+r()*.4);
  g+=`<path d="M${x} ${Math.round(t)}V${Math.round(b)}M${x-1} ${Math.round(o)+.5}h1M${x} ${Math.round(cl)+.5}h1.500" stroke="${G}"/>`;
}
s+=`<g shape-rendering="crispEdges">${g}</g>`;
s+=line(MA,1080,70,ZX2,'#ff0000');
s+=frameTop(c);
document.getElementById('c-chf').innerHTML=s;
})();

/* ---------- EURUSD ---------- */
(function(){
const E=[[33,865,935],[50,880,940],[67,850,950],[75,760,870],[85,640,760],[95,580,700],[105,485,620],[120,395,580],[130,395,560],[145,490,570],[160,490,580],[185,530,600],[205,520,600],[220,560,640],[240,540,610],[265,460,560],[280,350,480],[292,250,460],[300,300,630],[310,560,815],[318,480,790],[330,440,570],[345,460,560],[360,455,530],[375,480,510],[390,395,530],[400,420,490],[415,490,560],[430,495,640],[450,560,690],[465,560,690],[485,410,600],[500,460,590],[520,420,530],[540,480,550],[565,450,530],[575,430,490],[595,470,545],[620,510,760],[635,590,720],[650,600,730],[670,560,810],[690,450,600],[710,520,580],[730,530,600],[755,540,640],[775,590,650],[800,600,770],[815,690,780],[832,700,860],[845,470,680],[855,450,600],[865,285,380],[880,330,420],[895,420,500],[915,470,500],[930,375,470],[955,440,480],[970,330,430],[980,162,420],[990,440,680],[1005,490,630],[1020,580,700],[1030,575,800],[1045,465,600],[1060,550,600],[1080,560,630],[1105,590,650],[1125,630,680],[1150,630,690],[1165,520,740],[1180,490,650],[1200,600,720],[1215,410,660],[1225,350,550],[1240,410,500],[1260,450,500],[1270,375,430],[1290,430,490],[1300,315,480],[1320,395,420],[1335,305,420],[1345,375,610],[1365,490,590],[1382,400,530],[1392,200,400],[1405,200,450],[1418,345,490],[1435,395,450],[1452,410,450]];
const MA=[[33,838],[40,838],[60,862],[75,850],[95,820],[120,730],[150,620],[175,550],[203,535],[235,570],[265,568],[295,520],[310,535],[340,510],[365,503],[400,518],[425,495],[450,525],[470,545],[500,555],[540,535],[575,490],[610,495],[655,565],[680,598],[715,603],[750,565],[780,562],[840,650],[852,650],[895,570],[945,450],[980,425],[1005,445],[1040,500],[1065,530],[1095,600],[1125,612],[1155,625],[1205,628],[1240,560],[1295,480],[1320,432],[1340,432],[1380,452],[1400,420],[1452,425]];
const c={L:1095,R:1856,v0:1127,lx:6,name:'EURUSD,H1',dates:['31 Mar 2016','31 Mar 19:00','1 Apr 11:00','4 Apr 03:00','4 Apr 19:00','5 Apr 11:00','6 Apr 03:00','6 Apr 19:00','7 Apr 11:00','8 Apr 03:00','8 Apr 19:00','11 Apr 11:00'],
 panes:[{t:490,b:803,h:['1.14465','1.14290','1.14115','1.13940','1.13765','1.13590','1.13415','1.13240','1.13065'].map((t,i)=>[517.3+32*i,t])}]};
let s=frame(c),r=rng(5),g='';
for(let i=0;i<188;i++){
  const X=33+7.564*i,x=px(1080+X/ZX2),e=interp(E,X),rg=e[2]-e[1];
  const hi=450+(e[1]+rg*r()*.3)/3,lo=450+(e[2]-rg*r()*.3)/3;
  const top=hi+(lo-hi)*(.1+r()*.3),bot=lo-(lo-hi)*(.1+r()*.3);
  g+=candleSvg(x,hi,top,bot,lo,r()<.45,3);
}
s+=`<g shape-rendering="crispEdges">${g}</g>`;
s+=line(MA,1080,450,ZX2,'#ff0000');
s+=frameTop(c);
document.getElementById('c-eur').innerHTML=s;
})();
</script>
</body>
</html>
